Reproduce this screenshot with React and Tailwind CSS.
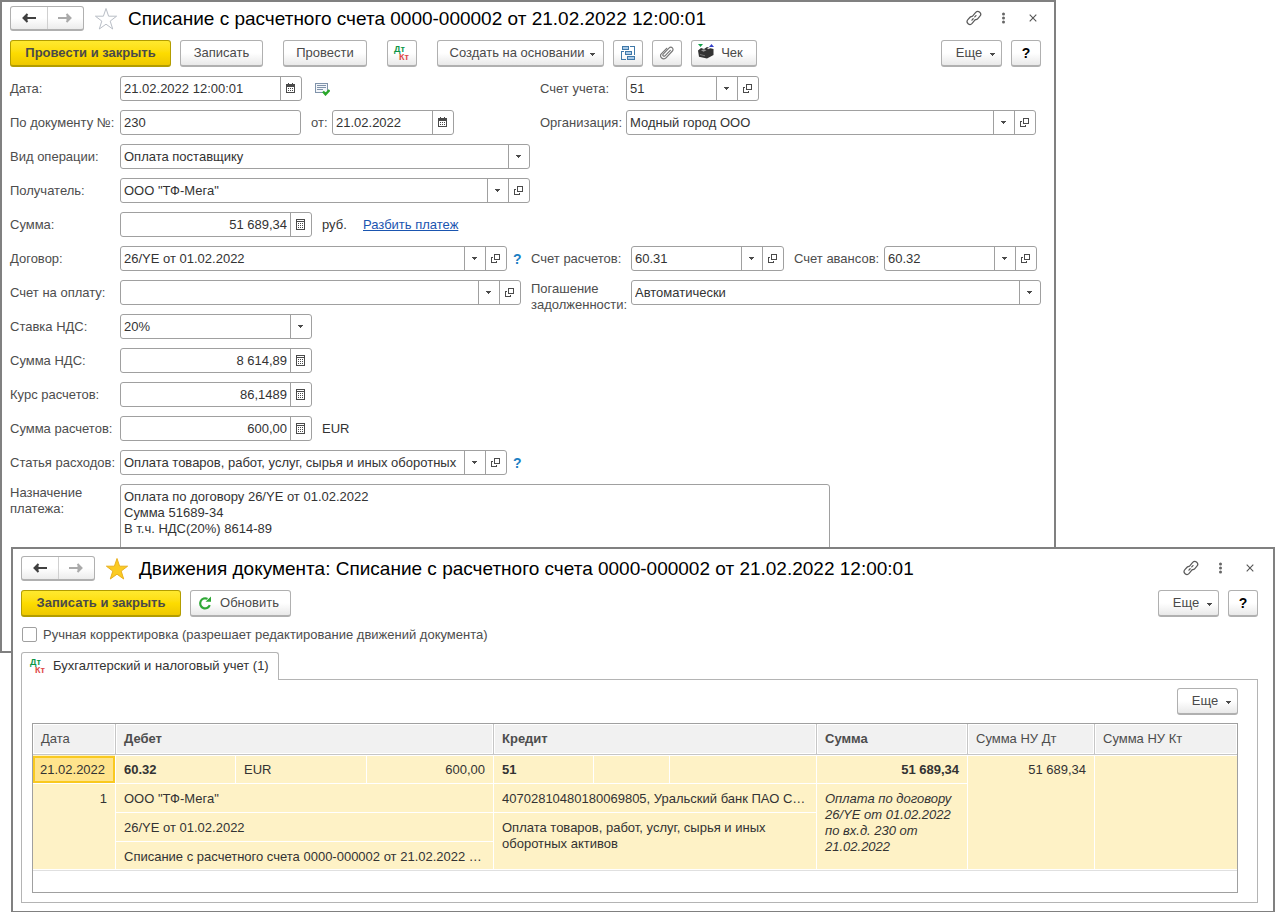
import React, { useState } from 'react'
import clsx from 'clsx'

/* ---------- icons ---------- */

function ArrowIcon({ flip }) {
  return (
    <svg width="14" height="10" viewBox="0 0 14 10" className={clsx(flip && 'rotate-180')} fill="none" stroke="currentColor" strokeWidth="2">
      <path d="M2 5h12" />
      <path d="M5.500 1L1.500 5l4 4" />
      <path d="M2 5l3-2.500v5z" fill="currentColor" strokeWidth="1" />
    </svg>
  )
}

function StarIcon({ filled }) {
  return (
    <svg width="24" height="24" viewBox="0 0 24 24" fill={filled ? '#fbcb22' : '#fff'} stroke={filled ? '#e8b020' : '#b9bec6'} strokeWidth="1">
      <path d="M12 1.500l2.600 7.700h8l-6.400 4.900 2.500 7.900-6.700-4.800L5.300 22l2.500-7.900-6.400-4.900h8z" />
    </svg>
  )
}

function LinkIcon() {
  return (
    <svg width="16" height="16" viewBox="0 0 17 17" fill="none" stroke="#5a5a5a" strokeWidth="1.3" strokeLinecap="round">
      <path d="M7.200 6.200l3.100-3.600a3 3 0 0 1 4.500 4l-2.200 2.600a3 3 0 0 1-2.600 1" />
      <path d="M9.600 10.600l-3.100 3.700a3 3 0 0 1-4.500-4l2.300-2.600a3 3 0 0 1 2.400-1" />
      <path d="M6.300 10.800l1.300-1.500M9.300 7.400l1.300-1.500" />
    </svg>
  )
}

function DotsIcon() {
  return (
    <svg width="3" height="12" viewBox="0 0 3 12" fill="#666">
      <circle cx="1.500" cy="2" r="1.500" />
      <circle cx="1.500" cy="6" r="1.500" />
      <circle cx="1.500" cy="10" r="1.500" />
    </svg>
  )
}

function CloseIcon() {
  return (
    <svg width="8" height="8" viewBox="0 0 8 8" stroke="#555" strokeWidth="1.100">
      <path d="M.7.7l6.600 6.600M7.300.7L.7 7.300" />
    </svg>
  )
}

function Caret({ className }) {
  return (
    <svg width="5" height="3" viewBox="0 0 5 3" className={className} fill="#4a4a4a" shapeRendering="crispEdges">
      <path d="M0 0h5v1H4v1H3v1H2V2H1V1H0z" />
    </svg>
  )
}

function OpenIcon() {
  return (
    <svg width="9" height="9" viewBox="0 0 9 9" fill="none" stroke="#4a4a4a" shapeRendering="crispEdges">
      <path d="M3.500.5h5v5h-5z" />
      <path d="M2 3.500H.5v5h5V7" />
    </svg>
  )
}

function CalendarIcon() {
  return (
    <svg width="9" height="11" viewBox="0 0 9 11" fill="#4a4a4a" shapeRendering="crispEdges">
      <path d="M0 1h9v9H0zM1 4v5h7V4z" fillRule="evenodd" />
      <path d="M2 0h1v1H2zM6 0h1v1H6z" />
      <path d="M2 5h1v1H2zM4 5h1v1H4zM6 5h1v1H6zM2 7h1v1H2zM4 7h1v1H4zM6 7h1v1H6z" />
    </svg>
  )
}

function CalcIcon() {
  return (
    <svg width="9" height="11" viewBox="0 0 9 11" fill="#4a4a4a" shapeRendering="crispEdges">
      <path d="M0 0h9v11H0zM1 1v1h7V1zM1 3v7h7V3z" fillRule="evenodd" />
      <path d="M2 4h1v1H2zM4 4h1v1H4zM6 4h1v1H6zM2 6h1v1H2zM4 6h1v1H4zM6 6h1v1H6zM2 8h1v1H2zM4 8h1v1H4zM6 8h1v1H6z" />
    </svg>
  )
}

function PostedIcon() {
  return (
    <svg width="15" height="13" viewBox="0 0 15 13" fill="none">
      <path d="M.5.5h12v9H.5z" fill="#f3f6fa" stroke="#8093aa" shapeRendering="crispEdges" />
      <path d="M2 2.500h9M2 4.500h9M2 6.500h6" stroke="#8093aa" shapeRendering="crispEdges" />
      <path d="M8 8.500l2.500 2.800L14.500 7" stroke="#28a828" strokeWidth="2.400" />
    </svg>
  )
}

function StructureIcon() {
  return (
    <svg width="14" height="14" viewBox="0 0 14 14" fill="#a9c9e6" stroke="#3f78a8" shapeRendering="crispEdges">
      <path d="M1.500.5h6v3h-6zM4.500 5.500h6v3h-6zM6.500 10.500h7v3h-7z" />
      <path d="M9 .5h4.500V9M3 5.500H.5v8H5" fill="none" />
    </svg>
  )
}

function ClipIcon() {
  return (
    <svg width="14" height="14" viewBox="0 0 14 14" fill="none" stroke="#777" strokeWidth="1.200" strokeLinecap="round">
      <path d="M10.300 4.300L5 9.800a1.200 1.200 0 0 1-1.800-1.700l6-6.200a2.200 2.200 0 0 1 3.200 3.100L6 11.800a3 3 0 0 1-4.500-4.200L6.700 2.300" />
    </svg>
  )
}

function PrinterIcon() {
  return (
    <svg width="18" height="16" viewBox="0 0 18 16" className="-mt-1">
      <path d="M1 1h5L3.500 4z" fill="#12a04a" />
      <path d="M12 4l2.500-3L17 4z" fill="#3340c8" />
      <path d="M1 7.500L4 5l3 1 3-2 3.500 1.300 3 .8v6L10 15.500l-8-1.800z" fill="#333" />
      <path d="M4 7.200l3-1 2.500 1-3 1.500z" fill="#999" />
      <path d="M10 5.500l2.500-.8 1 .6-2.500 1z" fill="#e8e8e8" />
      <path d="M3 11.500l5 1.300" stroke="#777" />
    </svg>
  )
}

function RefreshIcon() {
  return (
    <svg width="14" height="14" viewBox="0 0 14 14" fill="none">
      <path d="M11.800 9.200A5 5 0 1 1 9.500 2.900" stroke="#2fa836" strokeWidth="2.200" />
      <path d="M7.500 5.800H13V.5z" fill="#2fa836" />
    </svg>
  )
}

function DtKtIcon() {
  return (
    <svg width="18" height="16" viewBox="0 0 18 16" fontFamily="Liberation Sans, Arial, sans-serif" fontWeight="bold" fontSize="9">
      <text x="1" y="7" fill="#0d9647">Дт</text>
      <text x="6" y="15" fill="#e04848">Кт</text>
    </svg>
  )
}

/* ---------- controls ---------- */

function Button({ primary, className, children, ...rest }) {
  return (
    <button
      type="button"
      className={clsx(
        'flex h-[27px] shrink-0 items-center justify-center rounded-[3px] border border-b-2 whitespace-nowrap',
        primary
          ? 'border-[#b39d00] bg-linear-to-b from-[#ffe92e] via-[#fddc00] to-[#eec800] font-bold text-[#4a4a4a]'
          : 'border-[#b0b0b0] bg-linear-to-b from-white from-50% to-[#e9e9e9] text-[#4a4a4a]',
        className,
      )}
      {...rest}
    >
      {children}
    </button>
  )
}

function MoreButton() {
  return (
    <Button className="w-[61px] gap-2 pl-2">
      Еще <Caret className="mt-[3px]" />
    </Button>
  )
}

function HelpButton() {
  return (
    <Button className="w-[30px] text-sm font-bold">
      <span className="text-black">?</span>
    </Button>
  )
}

const ADDONS = {
  list: { icon: Caret, label: 'Выбрать из списка' },
  open: { icon: OpenIcon, label: 'Открыть' },
  date: { icon: CalendarIcon, label: 'Календарь' },
  calc: { icon: CalcIcon, label: 'Калькулятор' },
}

function Field({ id, value, addons = [], className, right }) {
  const [text, setText] = useState(value)
  return (
    <div className={clsx('flex h-[25px] rounded-[3px] border border-[#a0a0a0] bg-white', className)}>
      <input
        id={id}
        value={text}
        onChange={e => setText(e.target.value)}
        className={clsx('w-0 min-w-0 grow px-[3px] text-[#333] outline-none', right && 'text-right')}
      />
      {addons.map(key => {
        const Icon = ADDONS[key].icon
        return (
          <button
            key={key}
            type="button"
            aria-label={ADDONS[key].label}
            className="flex w-[21px] shrink-0 items-center justify-center border-l border-[#a0a0a0] pr-px"
          >
            <Icon />
          </button>
        )
      })}
    </div>
  )
}

function Select({ id, value, className }) {
  return (
    <div className={clsx('relative flex h-[25px] rounded-[3px] border border-[#a0a0a0] bg-white', className)}>
      <select id={id} defaultValue={value} className="grow appearance-none px-[3px] text-[#333] outline-none">
        <option>{value}</option>
      </select>
      <span className="pointer-events-none absolute inset-y-0 right-0 flex w-[21px] items-center justify-center border-l border-[#a0a0a0] pr-px">
        <Caret />
      </span>
    </div>
  )
}

function Row({ id, label, children }) {
  return (
    <div className="flex h-[25px] items-center">
      <label htmlFor={id} className="w-[110px] shrink-0 whitespace-nowrap">{label}</label>
      {children}
    </div>
  )
}

function Hint() {
  return (
    <button type="button" aria-label="Подсказка" className="w-6 shrink-0 pl-[6px] text-left text-sm font-bold text-[#1b7fc4]">
      ?
    </button>
  )
}

function TitleBar({ title, starred }) {
  return (
    <header className="flex h-[25px] items-center">
      <div className="flex h-[25px] w-[74px] shrink-0 rounded-[3px] border border-b-2 border-[#b0b0b0] bg-linear-to-b from-white from-50% to-[#ececec]">
        <button type="button" aria-label="Назад" className="flex w-[37px] items-center justify-center border-r border-[#d0d0d0] text-[#404040]">
          <ArrowIcon />
        </button>
        <button type="button" aria-label="Вперед" className="flex grow items-center justify-center pr-px text-[#aaa]">
          <ArrowIcon flip />
        </button>
      </div>
      <button type="button" aria-label="В избранное" className="ml-[10px] shrink-0">
        <StarIcon filled={starred} />
      </button>
      <h1 className="ml-[10px] grow text-[19px] leading-6 whitespace-nowrap text-black">{title}</h1>
      <div className="flex shrink-0 items-center pr-1 pb-[2px]">
        <button type="button" aria-label="Ссылка"><LinkIcon /></button>
        <button type="button" aria-label="Меню" className="ml-5"><DotsIcon /></button>
        <button type="button" aria-label="Закрыть" className="ml-6"><CloseIcon /></button>
      </div>
    </header>
  )
}

/* ---------- windows ---------- */

function PaymentWindow() {
  return (
    <section className="mr-[220px] h-[653px] overflow-hidden border-2 border-[#808080] bg-white pt-1 pr-[13px] pl-2">
      <TitleBar title="Списание с расчетного счета 0000-000002 от 21.02.2022 12:00:01" />

      <div className="mt-[9px] flex items-center gap-[9px]">
        <Button primary className="w-[161px]">Провести и закрыть</Button>
        <Button className="mr-[11px] w-[83px]">Записать</Button>
        <Button className="mr-[11px] w-[84px]">Провести</Button>
        <Button className="mr-[11px] w-[30px]" aria-label="Движения документа"><DtKtIcon /></Button>
        <Button className="w-[167px] gap-[6px] pl-1">Создать на основании <Caret className="mt-[3px]" /></Button>
        <Button className="w-[30px]" aria-label="Структура подчиненности"><StructureIcon /></Button>
        <Button className="w-[30px]" aria-label="Файлы"><ClipIcon /></Button>
        <Button className="w-[66px] gap-[6px] pr-2"><PrinterIcon /> Чек</Button>
        <div className="grow" />
        <MoreButton />
        <HelpButton />
      </div>

      <form className="mt-[9px] flex flex-col gap-[9px]" onSubmit={e => e.preventDefault()}>
        <Row id="date" label="Дата:">
          <Field id="date" value="21.02.2022 12:00:01" addons={['date']} className="w-[182px]" />
          <span className="ml-[13px] w-[225px] pt-[2px]"><PostedIcon /></span>
          <label htmlFor="account" className="w-[86px]">Счет учета:</label>
          <Field id="account" value="51" addons={['list', 'open']} className="w-[133px]" />
        </Row>
        <Row id="docno" label="По документу №:">
          <Field id="docno" value="230" className="w-[181px]" />
          <label htmlFor="docdate" className="ml-[10px] w-[21px]">от:</label>
          <Field id="docdate" value="21.02.2022" addons={['date']} className="w-[122px]" />
          <label htmlFor="org" className="ml-[86px] w-[86px] shrink-0">Организация:</label>
          <Field id="org" value="Модный город ООО" addons={['list', 'open']} className="mr-[5px] grow" />
        </Row>
        <Row id="kind" label="Вид операции:">
          <Select id="kind" value="Оплата поставщику" className="w-[410px]" />
        </Row>
        <Row id="payee" label="Получатель:">
          <Field id="payee" value={'ООО "ТФ-Мега"'} addons={['list', 'open']} className="w-[410px]" />
        </Row>
        <Row id="sum" label="Сумма:">
          <Field id="sum" value="51 689,34" right addons={['calc']} className="w-[192px]" />
          <span className="ml-[10px] w-[41px] text-[#333]">руб.</span>
          <a href="#split" className="text-[#1a55b0] underline">Разбить платеж</a>
        </Row>
        <Row id="contract" label="Договор:">
          <Field id="contract" value="26/YE от 01.02.2022" addons={['list', 'open']} className="w-[387px]" />
          <Hint />
          <label htmlFor="settle" className="w-[100px]">Счет расчетов:</label>
          <Field id="settle" value="60.31" addons={['list', 'open']} className="w-[153px]" />
          <label htmlFor="advance" className="ml-[10px] w-[90px]">Счет авансов:</label>
          <Field id="advance" value="60.32" addons={['list', 'open']} className="w-[153px]" />
        </Row>
        <Row id="invoice" label="Счет на оплату:">
          <Field id="invoice" value="" addons={['list', 'open']} className="w-[401px]" />
          <label htmlFor="debt" className="ml-[10px] w-[100px] shrink-0 self-start pt-px leading-4">
            Погашение задолженности:
          </label>
          <Select id="debt" value="Автоматически" className="grow" />
        </Row>
        <Row id="vat" label="Ставка НДС:">
          <Select id="vat" value="20%" className="w-[192px]" />
        </Row>
        <Row id="vatsum" label="Сумма НДС:">
          <Field id="vatsum" value="8 614,89" right addons={['calc']} className="w-[192px]" />
        </Row>
        <Row id="rate" label="Курс расчетов:">
          <Field id="rate" value="86,1489" right addons={['calc']} className="w-[192px]" />
        </Row>
        <Row id="cursum" label="Сумма расчетов:">
          <Field id="cursum" value="600,00" right addons={['calc']} className="w-[192px]" />
          <span className="ml-[10px] text-[#333]">EUR</span>
        </Row>
        <Row id="item" label="Статья расходов:">
          <Field id="item" value="Оплата товаров, работ, услуг, сырья и иных оборотных" addons={['list', 'open']} className="w-[387px]" />
          <Hint />
        </Row>
        <div className="flex">
          <label htmlFor="purpose" className="w-[110px] shrink-0 pt-px pr-4 leading-4">Назначение платежа:</label>
          <textarea
            id="purpose"
            className="h-[130px] w-[710px] resize-none rounded-[3px] border border-[#a0a0a0] px-[3px] py-1 leading-4 text-[#333] outline-none"
            defaultValue={'Оплата по договору 26/YE от 01.02.2022\nСумма 51689-34\nВ т.ч. НДС(20%) 8614-89'}
          />
        </div>
      </form>
    </section>
  )
}

const HEAD = [
  { title: 'Дата' },
  { title: 'Дебет', span: 3, bold: true },
  { title: 'Кредит', span: 3, bold: true },
  { title: 'Сумма', bold: true },
  { title: 'Сумма НУ Дт' },
  { title: 'Сумма НУ Кт' },
]

function Cell({ className, children, ...rest }) {
  return (
    <td className={clsx('border-r border-b border-white px-2 align-top leading-4 text-[#333]', className)} {...rest}>
      {children}
    </td>
  )
}

function EntriesTable() {
  return (
    <div className="h-[170px] border border-[#a0a0a0]">
      <table className="w-full table-fixed border-separate border-spacing-0 border-b border-[#e0e0e0]">
        <colgroup>
          <col className="w-[83px]" />
          <col className="w-[120px]" />
          <col className="w-[131px]" />
          <col className="w-[127px]" />
          <col className="w-[100px]" />
          <col className="w-[76px]" />
          <col className="w-[147px]" />
          <col className="w-[151px]" />
          <col className="w-[127px]" />
          <col />
        </colgroup>
        <thead>
          <tr className="h-[31px]">
            {HEAD.map(h => (
              <th
                key={h.title}
                colSpan={h.span}
                className={clsx(
                  'border-r border-b border-[#c6c6c6] bg-[#f1f1f1] px-2 text-left text-[#4d4d4d] shadow-[inset_0_0_0_1px_#fff] last:border-r-0',
                  h.bold ? 'font-bold' : 'font-normal',
                )}
              >
                {h.title}
              </th>
            ))}
          </tr>
        </thead>
        <tbody className="bg-[#fef2c6]">
          <tr className="h-[29px]">
            <td className="border-r border-b border-white p-0 pt-px">
              <div className="flex h-[27px] items-center border-2 border-[#f9c920] bg-[#ffe48c] px-[5px] text-[#333]">21.02.2022</div>
            </td>
            <Cell className="border-t pt-[6px] font-bold">60.32</Cell>
            <Cell className="border-t pt-[6px]">EUR</Cell>
            <Cell className="border-t pt-[6px] text-right">600,00</Cell>
            <Cell className="border-t pt-[6px] font-bold">51</Cell>
            <Cell className="border-t" />
            <Cell className="border-t" />
            <Cell className="border-t pt-[6px] text-right font-bold">51 689,34</Cell>
            <Cell className="border-t pt-[6px] text-right" rowSpan={4}>51 689,34</Cell>
            <Cell className="border-t border-r-0" rowSpan={4} />
          </tr>
          <tr className="h-[29px]">
            <Cell className="pt-[7px] text-right" rowSpan={3}>1</Cell>
            <Cell className="pt-[7px]" colSpan={3}>ООО "ТФ-Мега"</Cell>
            <Cell className="pt-[7px] whitespace-nowrap" colSpan={3}>40702810480180069805, Уральский банк ПАО С…</Cell>
            <Cell className="pt-[7px] italic" rowSpan={3}>Оплата по договору 26/YE от 01.02.2022 по вх.д. 230 от 21.02.2022</Cell>
          </tr>
          <tr className="h-[29px]">
            <Cell className="pt-[7px]" colSpan={3}>26/YE от 01.02.2022</Cell>
            <Cell className="pt-[7px] pr-10" colSpan={3} rowSpan={2}>Оплата товаров, работ, услуг, сырья и иных оборотных активов</Cell>
          </tr>
          <tr className="h-[28px]">
            <Cell className="pt-[7px] whitespace-nowrap" colSpan={3}>Списание с расчетного счета 0000-000002 от 21.02.2022 …</Cell>
          </tr>
        </tbody>
      </table>
    </div>
  )
}

function EntriesWindow() {
  return (
    <section className="relative z-10 -mt-[106px] mr-px ml-[11px] border-2 border-b border-[#808080] bg-white px-2 pt-[7px] pb-2">
      <div className="pr-[7px]">
        <TitleBar starred title="Движения документа: Списание с расчетного счета 0000-000002 от 21.02.2022 12:00:01" />

        <div className="mt-[9px] flex items-center gap-[9px]">
          <Button primary className="w-[160px]">Записать и закрыть</Button>
          <Button className="w-[101px] gap-2 pr-1"><RefreshIcon /> Обновить</Button>
          <div className="grow" />
          <MoreButton />
          <HelpButton />
        </div>

        <label className="mt-[10px] flex h-[15px] items-center gap-[6px] pl-px">
          <input type="checkbox" className="h-[15px] w-[15px] appearance-none rounded-[2px] border border-[#a0a0a0] bg-white checked:bg-[#fddc00]" />
          Ручная корректировка (разрешает редактирование движений документа)
        </label>

        <div role="tablist" className="mt-[10px] flex">
          <button
            type="button"
            role="tab"
            aria-selected="true"
            className="relative z-10 -mb-px flex h-7 w-[258px] items-center gap-[6px] rounded-t-[3px] border border-b-0 border-[#b4b4b4] bg-white pb-[2px] pl-[7px] whitespace-nowrap text-[#333]"
          >
            <DtKtIcon /> Бухгалтерский и налоговый учет (1)
          </button>
        </div>
        <div role="tabpanel" className="border border-[#b4b4b4] pt-2 pr-[19px] pb-[9px] pl-[10px]">
          <div className="mb-2 flex justify-end">
            <MoreButton />
          </div>
          <EntriesTable />
        </div>
      </div>
    </section>
  )
}

export default function App() {
  return (
    <main className="bg-white font-['Liberation_Sans',Arial,sans-serif] text-[13px] leading-4 text-[#4d4d4d]">
      <PaymentWindow />
      <EntriesWindow />
    </main>
  )
}
